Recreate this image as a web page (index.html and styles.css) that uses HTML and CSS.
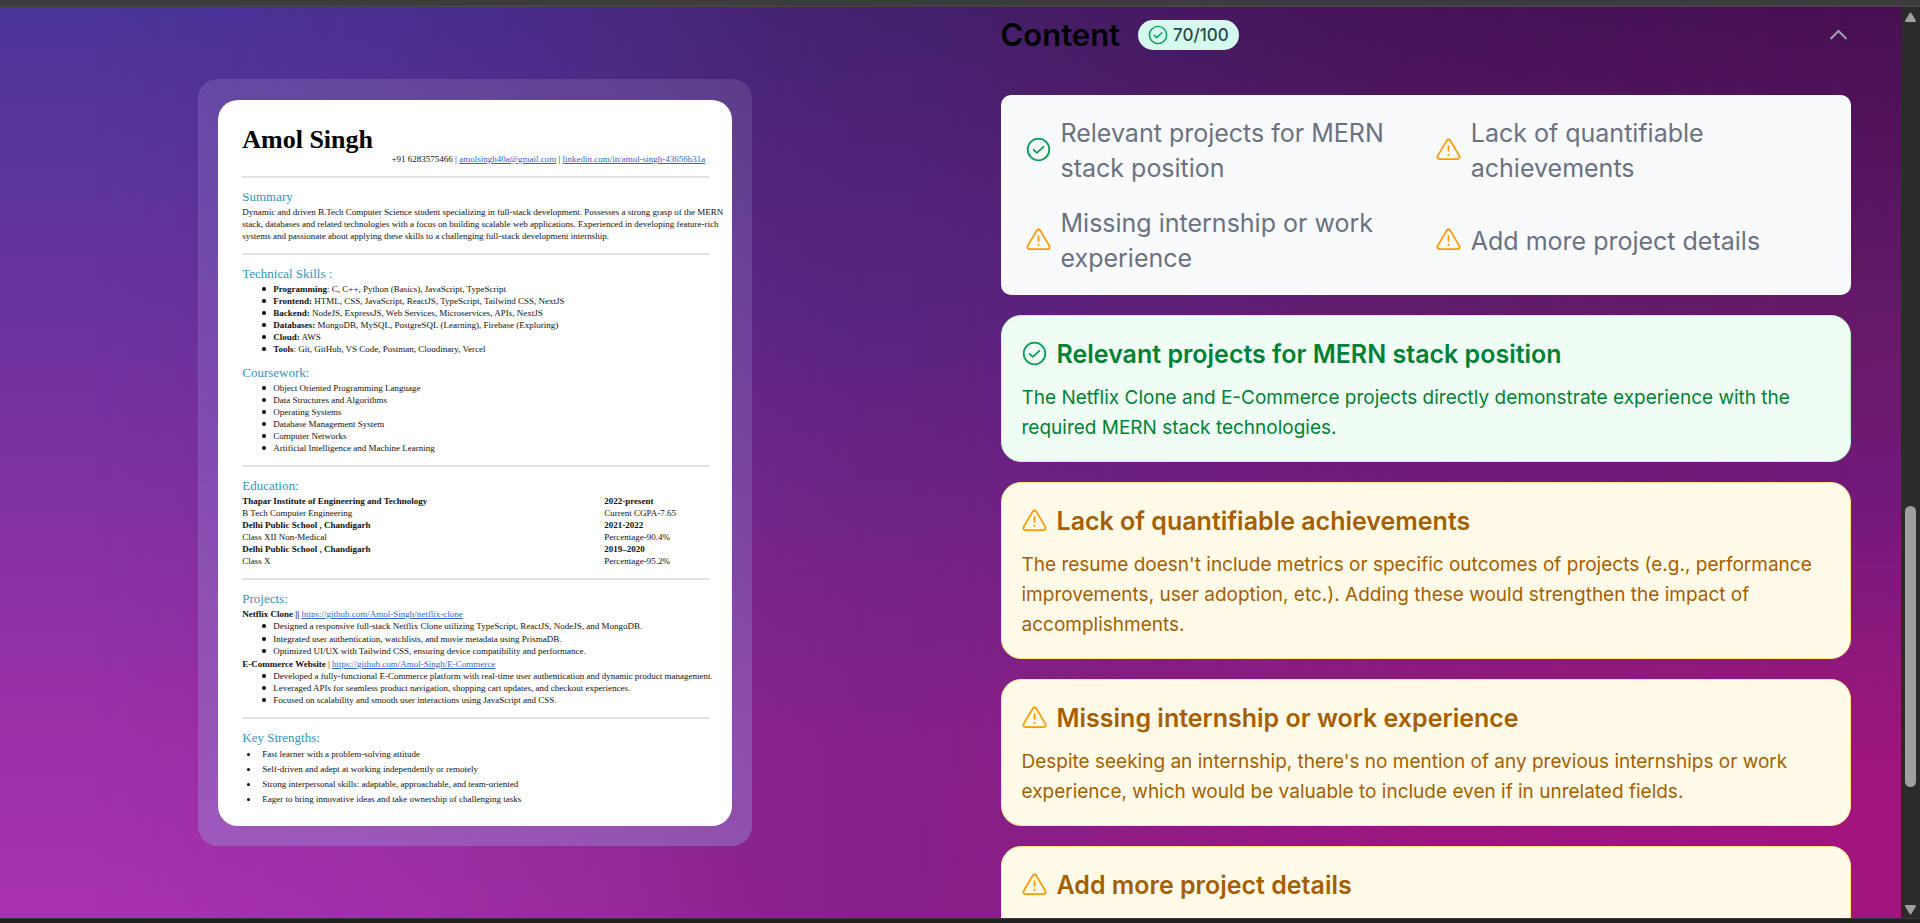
FILE: index.html
```html
<!DOCTYPE html>
<html lang="en">
<head>
<meta charset="utf-8">
<title>Resume review</title>
<link rel="stylesheet" href="styles.css">
</head>
<body>
<svg class="sprite" aria-hidden="true">
  <symbol id="check" viewBox="0 0 25 25"><circle cx="12.5" cy="12.5" r="10.8"/><path d="M7.6 12.8l3.2 3 6.6-6"/></symbol>
  <symbol id="warn" viewBox="0 0 25 25"><path d="M10.7 3.6Q12.5 1.400 14.3 3.6L23.2 18.6Q24.600 21.9 21.4 22.2H3.6Q.4 21.9 1.8 18.6ZM12.500 9.2v4.600M12.500 17.600v.6"/></symbol>
</svg>
<div class="window">
  <div class="edge-top"></div>
  <div class="view">
    <main class="page">
      <section class="preview">
        <div class="frame">
          <article class="sheet">
            <h1 class="name">Amol Singh</h1>
            <p class="contact">+91 6283575466 | <a href="#">amolsingh40a@gmail.com</a> | <a href="#">linkedin.com/in/amol-singh-43656b31a</a></p>
            <section class="part">
              <h2 class="head">Summary</h2>
              <p class="summary">Dynamic and driven B.Tech Computer Science student specializing in full-stack development. Possesses a strong grasp of the MERN<br>stack, databases and related technologies with a focus on building scalable web applications. Experienced in developing feature-rich<br>systems and passionate about applying these skills to a challenging full-stack development internship.</p>
            </section>
            <section class="part">
              <h2 class="head">Technical Skills :</h2>
              <ul class="list">
                <li><b>Programming</b>: C, C++, Python (Basics), JavaScript, TypeScript</li>
                <li><b>Frontend:</b> HTML, CSS, JavaScript, ReactJS, TypeScript, Tailwind CSS, NextJS</li>
                <li><b>Backend:</b> NodeJS, ExpressJS, Web Services, Microservices, APIs, NextJS</li>
                <li><b>Databases:</b> MongoDB, MySQL, PostgreSQL (Learning), Firebase (Exploring)</li>
                <li><b>Cloud:</b> AWS</li>
                <li><b>Tools</b>: Git, GitHub, VS Code, Postman, Cloudinary, Vercel</li>
              </ul>
              <h2 class="head head-next">Coursework:</h2>
              <ul class="list">
                <li>Object Oriented Programming Language</li>
                <li>Data Structures and Algorithms</li>
                <li>Operating Systems</li>
                <li>Database Management System</li>
                <li>Computer Networks</li>
                <li>Artificial Intelligence and Machine Learning</li>
              </ul>
            </section>
            <section class="part">
              <h2 class="head">Education:</h2>
              <table class="schools">
                <tr><th>Thapar Institute of Engineering and Technology</th><th>2022-present</th></tr>
                <tr><td>B Tech Computer Engineering</td><td>Current CGPA-7.65</td></tr>
                <tr><th>Delhi Public School , Chandigarh</th><th>2021-2022</th></tr>
                <tr><td>Class XII Non-Medical</td><td>Percentage-90.4%</td></tr>
                <tr><th>Delhi Public School , Chandigarh</th><th>2019–2020</th></tr>
                <tr><td>Class X</td><td>Percentage-95.2%</td></tr>
              </table>
            </section>
            <section class="part">
              <h2 class="head">Projects:</h2>
              <p><b>Netflix Clone ||</b> <a href="#">https://github.com/Amol-Singh/netflix-clone</a></p>
              <ul class="list list-spaced">
                <li>Designed a responsive full-stack Netflix Clone utilizing TypeScript, ReactJS, NodeJS, and MongoDB.</li>
                <li>Integrated user authentication, watchlists, and movie metadata using PrismaDB.</li>
                <li>Optimized UI/UX with Tailwind CSS, ensuring device compatibility and performance.</li>
              </ul>
              <p><b>E-Commerce Website</b> | <a href="#">https://github.com/Amol-Singh/E-Commerce</a></p>
              <ul class="list">
                <li>Developed a fully-functional E-Commerce platform with real-time user authentication and dynamic product management.</li>
                <li>Leveraged APIs for seamless product navigation, shopping cart updates, and checkout experiences.</li>
                <li>Focused on scalability and smooth user interactions using JavaScript and CSS.</li>
              </ul>
            </section>
            <section class="part">
              <h2 class="head">Key Strengths:</h2>
              <ul class="list list-loose">
                <li>Fast learner with a problem-solving attitude</li>
                <li>Self-driven and adept at working independently or remotely</li>
                <li>Strong interpersonal skills: adaptable, approachable, and team-oriented</li>
                <li>Eager to bring innovative ideas and take ownership of challenging tasks</li>
              </ul>
            </section>
          </article>
        </div>
      </section>
      <section class="review">
        <header class="bar">
          <h2 class="title">Content</h2>
          <span class="badge"><svg class="icon icon-small ok"><use href="#check"/></svg>70/100</span>
          <button class="toggle" type="button" aria-label="Collapse"><svg class="chevron" viewBox="0 0 25 25"><path d="M4.5 16l8-8 8 8"/></svg></button>
        </header>
        <ul class="overview">
          <li><svg class="icon ok"><use href="#check"/></svg>Relevant projects for MERN stack position</li>
          <li><svg class="icon alert"><use href="#warn"/></svg>Lack of quantifiable achievements</li>
          <li><svg class="icon alert"><use href="#warn"/></svg>Missing internship or work experience</li>
          <li><svg class="icon alert"><use href="#warn"/></svg>Add more project details</li>
        </ul>
        <article class="card good">
          <h3><svg class="icon ok"><use href="#check"/></svg>Relevant projects for MERN stack position</h3>
          <p>The Netflix Clone and E-Commerce projects directly demonstrate experience with the required MERN stack technologies.</p>
        </article>
        <article class="card">
          <h3><svg class="icon alert"><use href="#warn"/></svg>Lack of quantifiable achievements</h3>
          <p>The resume doesn't include metrics or specific outcomes of projects (e.g., performance improvements, user adoption, etc.). Adding these would strengthen the impact of accomplishments.</p>
        </article>
        <article class="card">
          <h3><svg class="icon alert"><use href="#warn"/></svg>Missing internship or work experience</h3>
          <p>Despite seeking an internship, there's no mention of any previous internships or work experience, which would be valuable to include even if in unrelated fields.</p>
        </article>
        <article class="card">
          <h3><svg class="icon alert"><use href="#warn"/></svg>Add more project details</h3>
        </article>
      </section>
    </main>
    <div class="scrollbar">
      <svg class="arrow" viewBox="0 0 13 11"><path d="M6.500 1.500l4.500 7.500h-9z"/></svg>
      <div class="track"><div class="thumb"></div></div>
      <svg class="arrow" viewBox="0 0 13 11"><path d="M6.500 9.500l4.500-7.500h-9z"/></svg>
    </div>
  </div>
  <div class="edge-bottom"></div>
</div>
</body>
</html>
```
FILE: styles.css
```css
* { box-sizing: border-box; margin: 0; padding: 0; }
ul { list-style: none; }
.sprite { position: absolute; width: 0; height: 0; }

.window {
  display: flex;
  flex-direction: column;
  height: 100vh;
  overflow: hidden;
  font-family: Inter, "Liberation Sans", sans-serif;
}
.edge-top { flex: none; height: 7px; background: #3c3c3c; border-bottom: 2px solid #454545; }
.edge-bottom { flex: none; height: 5px; background: #211f1f; border-top: 1px solid #3a3a3a; }
.view { flex: 1; min-height: 0; display: flex; }

.page {
  position: relative;
  isolation: isolate;
  flex: 1;
  min-width: 0;
  display: grid;
  grid-template-columns: 1fr 1fr;
  overflow: hidden;
  background: linear-gradient(#4a349a, #5f349c 22%, #7c32a0 50%, #9a30a6 78%, #aa32b0);
}
.page::before, .page::after { content: ""; position: absolute; inset: 0; z-index: -1; }
.page::before {
  background: linear-gradient(#44216c, #5a2482 35%, #6e2386 55%, #842188 80%, #862088);
  mask-image: linear-gradient(to right, transparent 5%, #0003 20%, #0008 33%, #000d 40%, #000 46%);
}
.page::after {
  background: linear-gradient(#470f52, #651a68 35%, #74197a 55%, #90187c 72%, #a2147e 88%);
  mask-image: linear-gradient(to right, transparent 48%, #000c 75%, #000);
}

/* Resume preview */
.preview { display: flex; justify-content: center; align-items: flex-start; padding: 72px 20px 0; }
.frame {
  width: 100%;
  max-width: 554px;
  padding: 21px 20px 20px;
  border-radius: 20px;
  background: linear-gradient(#ffffff1c, #9696dc44 50%, #9696dc66);
}
.sheet {
  padding: 25px 23px 19px 24px;
  border-radius: 20px;
  background: #fff;
  color: #111;
  font-family: "Liberation Serif", serif;
  font-size: 9px;
  line-height: 12px;
  white-space: nowrap;
}
.sheet a { color: #2f66d0; }
.name { font-size: 26px; line-height: 29px; color: #000; }
.contact { line-height: 11px; text-align: right; padding-right: 4px; }
.part { margin-top: 11px; padding-top: 11px; border-top: 2px solid #e2e2e2; }
.head { margin-bottom: 1px; font-size: 13px; line-height: 16px; font-weight: 400; color: #2f96bd; }
.head-next { margin-top: 10px; }
.list { padding-left: 31px; }
.list li { position: relative; }
.list li::before {
  content: "";
  position: absolute;
  left: -11px;
  top: 4px;
  width: 4px;
  height: 4px;
  border-radius: 50%;
  background: #000;
}
.list-spaced { padding-bottom: 1px; }
.list-spaced li:first-child { margin-bottom: 1px; }
.list-loose { padding-left: 20px; line-height: 15px; }
.list-loose li::before { left: -15px; top: 6px; width: 3px; height: 3px; }
.schools { width: 100%; border-collapse: collapse; }
.schools th, .schools td { text-align: left; }
.schools th:last-child, .schools td:last-child { width: 105px; }

/* Review column */
.review { padding: 0 50px; min-width: 0; display: flex; flex-direction: column; gap: 20px; }
.bar { display: flex; align-items: center; gap: 18px; height: 56px; margin-bottom: 12px; }
.title { font-size: 31px; line-height: 38px; font-weight: 600; color: #000; }
.badge {
  display: flex;
  align-items: center;
  gap: 5px;
  height: 30px;
  padding: 0 10px;
  border-radius: 15px;
  background: #d5f9ef;
  color: #264a4c;
  font-size: 17px;
  font-weight: 500;
}
.toggle { margin-left: auto; padding: 0; border: 0; background: none; }
.chevron { display: block; width: 25px; height: 25px; fill: none; stroke: #99a1af; stroke-width: 2; }
.icon {
  flex: none;
  width: 25px;
  height: 25px;
  margin-bottom: 2px;
  fill: none;
  stroke-width: 1.8;
  stroke-linecap: round;
  stroke-linejoin: round;
}
.icon-small { width: 20px; height: 20px; margin-bottom: 0; }
.ok { stroke: #099f5b; }
.alert { stroke: #fe9a00; }
.overview {
  display: grid;
  grid-template-columns: 1fr 1fr;
  gap: 20px;
  padding: 21px 25px 19px;
  border-radius: 10px;
  background: #f9fafc;
  color: #6a7282;
  font-size: 25px;
  line-height: 35px;
}
.overview li { display: flex; align-items: center; gap: 10px; }
.overview .icon { margin-bottom: 4px; }
.card {
  padding: 21px 20px 18px;
  border: 1px solid #fee685;
  border-radius: 20px;
  background: #fffbe8;
  color: #a65f00;
}
.card:last-child { min-height: 147px; }
.card h3 { display: flex; align-items: center; gap: 10px; font-size: 25px; line-height: 35px; font-weight: 600; }
.card p { margin-top: 11px; font-size: 19px; line-height: 30px; }
.good { border-color: #b9f8cf; background: #f0fdf5; color: #008236; }

/* Scrollbar */
.scrollbar { flex: none; width: 19px; padding: 5px 3px 3px; display: flex; flex-direction: column; background: #2b2b2b; }
.arrow { flex: none; width: 13px; height: 11px; fill: #9f9f9f; stroke: #9f9f9f; stroke-width: 2; stroke-linejoin: round; }
.track { flex: 1; display: flex; flex-direction: column; padding: 0 1px; }
.track::before { content: ""; flex: 483; }
.track::after { content: ""; flex: 117; }
.thumb { flex: 281; border-radius: 6px; background: #9f9f9f; }
```
